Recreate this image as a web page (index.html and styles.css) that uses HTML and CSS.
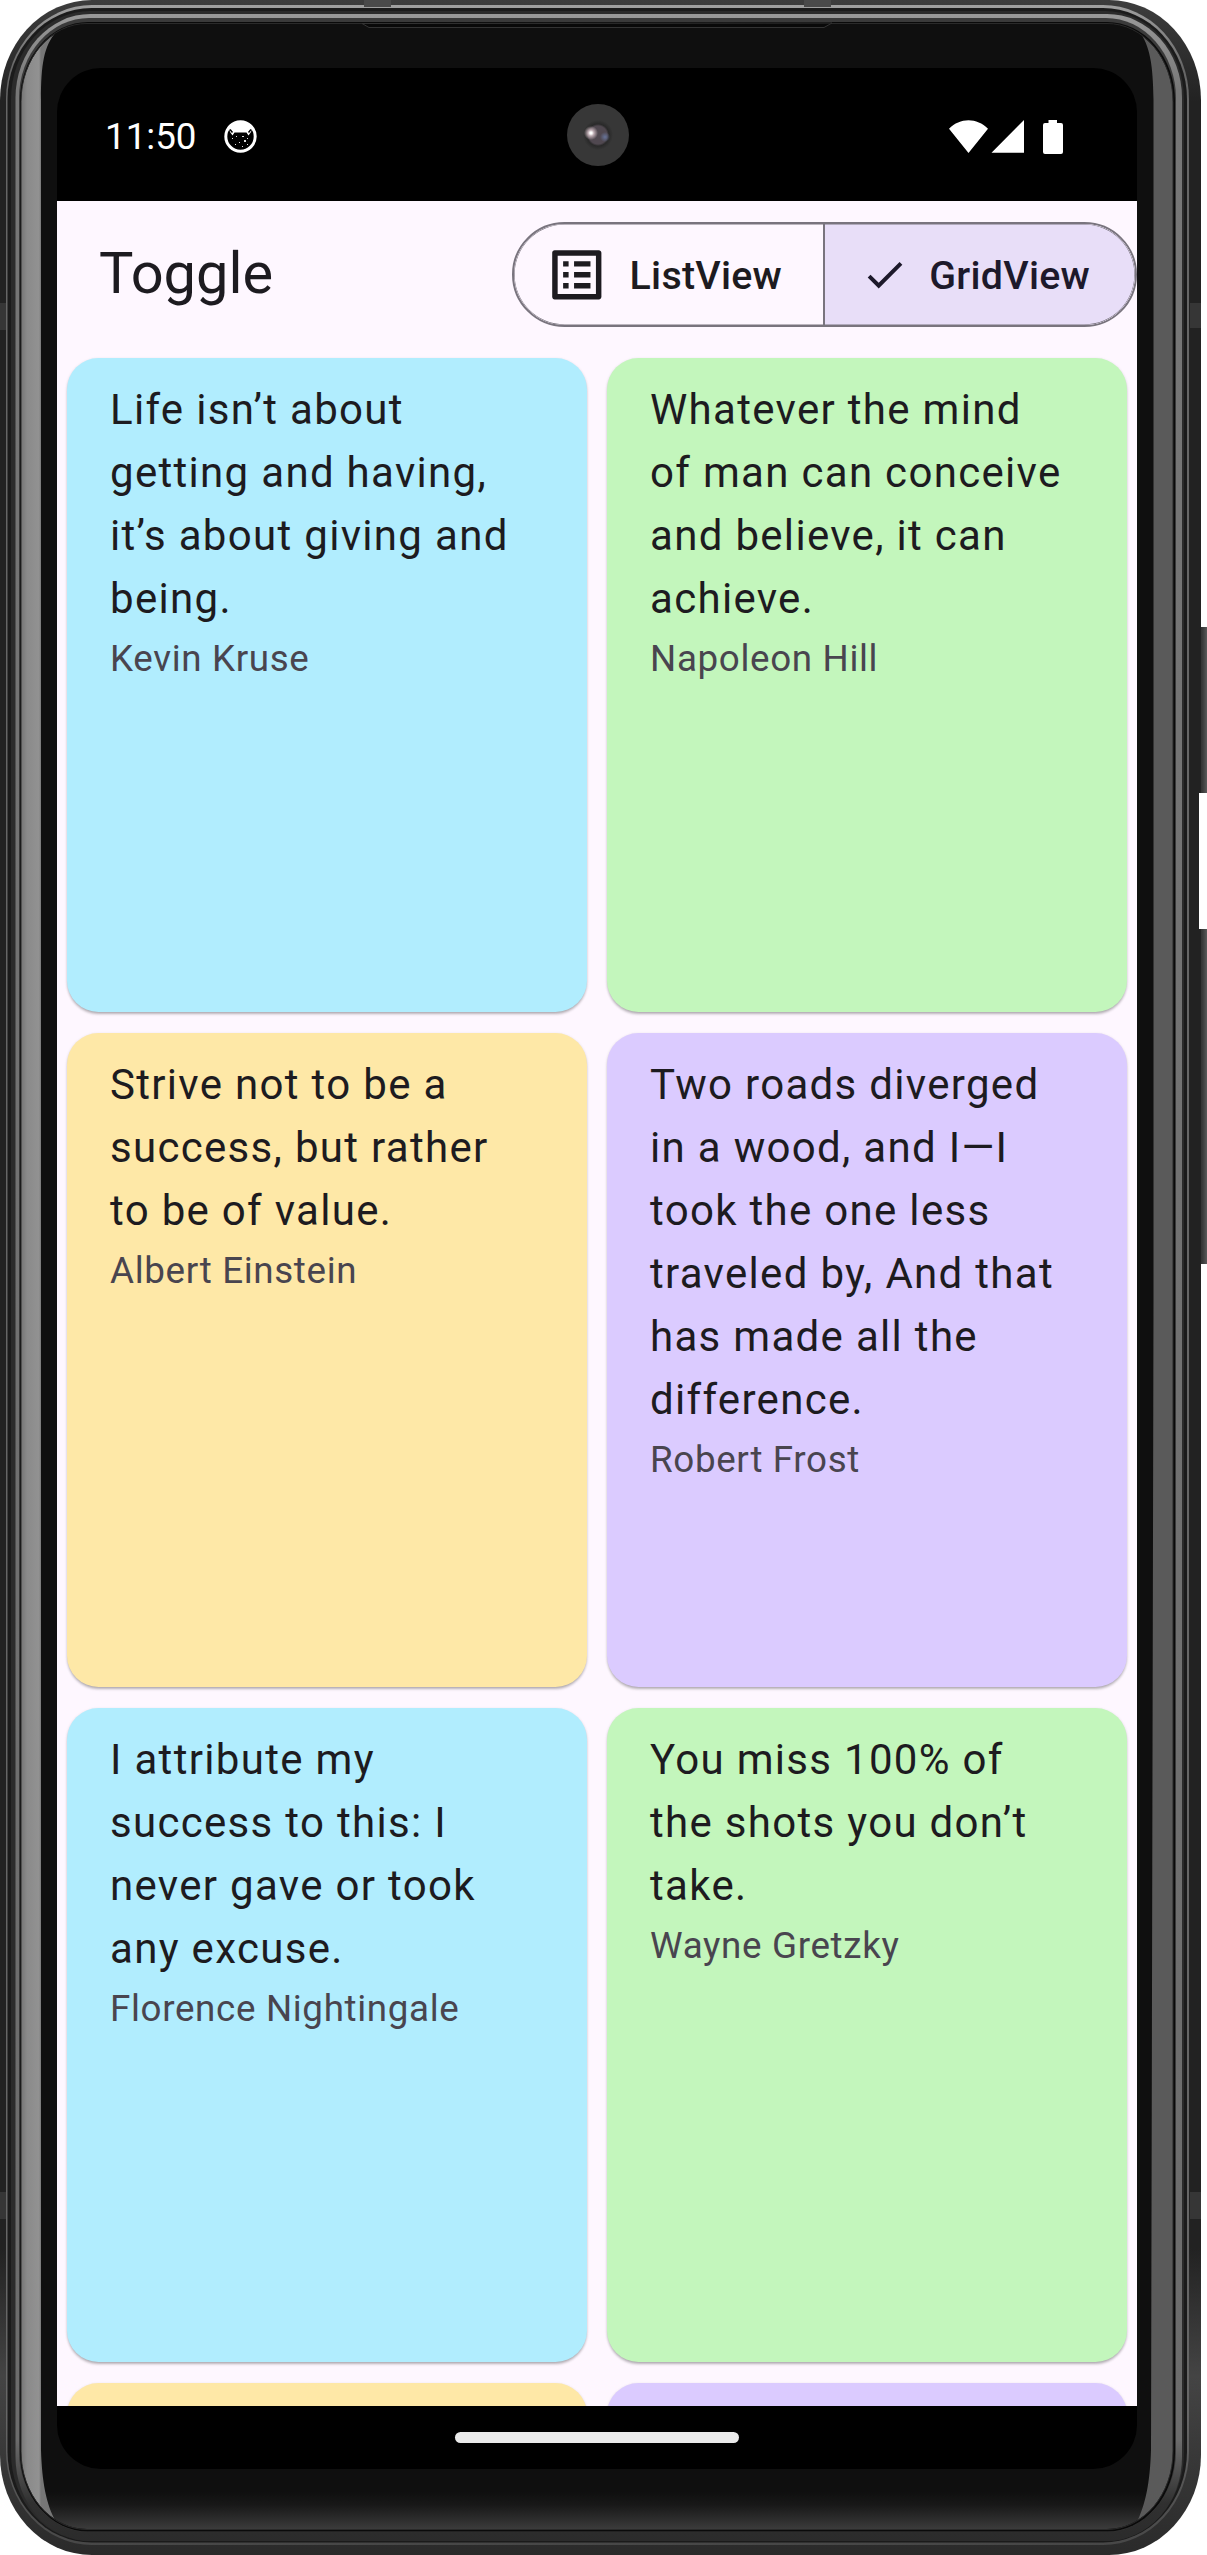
FILE: index.html
```html
<!DOCTYPE html>
<html lang="en">
<head>
<meta charset="utf-8">
<title>Toggle</title>
<link rel="stylesheet" href="styles.css">
</head>
<body>
<div class="device">
  <svg class="frame" viewBox="0 0 1207 2555" aria-hidden="true">
    <defs>
      <linearGradient id="edge" x1="0" y1="0" x2="0" y2="1">
        <stop offset="0" stop-color="#3d3d3d"/><stop offset=".04" stop-color="#222"/><stop offset=".88" stop-color="#222"/><stop offset=".93" stop-color="#444"/><stop offset="1" stop-color="#2a2a2a"/>
      </linearGradient>
      <linearGradient id="rim" x1="0" y1="0" x2="0" y2="1">
        <stop offset="0" stop-color="#a0a0a0"/><stop offset=".025" stop-color="#666"/><stop offset=".95" stop-color="#666"/><stop offset="1" stop-color="#474747"/>
      </linearGradient>
      <linearGradient id="band" x1="0" y1="0" x2="0" y2="1">
        <stop offset="0" stop-color="#999"/><stop offset=".03" stop-color="#777"/><stop offset=".96" stop-color="#6c6c6c"/><stop offset=".985" stop-color="#303030"/><stop offset="1" stop-color="#2b2b2b"/>
      </linearGradient>
      <linearGradient id="left" gradientUnits="userSpaceOnUse" x1="21" y1="0" x2="41" y2="0">
        <stop offset="0" stop-color="#757575"/><stop offset=".3" stop-color="#8a8a8a"/><stop offset=".9" stop-color="#929292"/><stop offset="1" stop-color="#777"/>
      </linearGradient>
      <linearGradient id="glow" x1="0" y1="0" x2="0" y2="1">
        <stop offset="0" stop-color="#0f0f0f"/><stop offset=".35" stop-color="#181818"/><stop offset="1" stop-color="#3b3b3b"/>
      </linearGradient>
      <linearGradient id="key" x1="0" y1="0" x2="1" y2="0">
        <stop offset="0" stop-color="#202020"/><stop offset=".6" stop-color="#3c3c3c"/><stop offset="1" stop-color="#5a5a5a"/>
      </linearGradient>
      <clipPath id="glass"><rect x="21" y="24" width="1152" height="2505" rx="66" ry="78"/></clipPath>
    </defs>
    <rect x="1197" y="627" width="10" height="166" fill="url(#key)"/>
    <rect x="1197" y="929" width="10" height="335" fill="url(#key)"/>
    <rect width="1201" height="2555" rx="92" ry="100" fill="url(#edge)"/>
    <rect x="1199" y="793" width="3" height="136" fill="#fff"/>
    <rect x="6" y="5" width="1183" height="2540" rx="86" ry="94" fill="url(#rim)"/>
    <rect x="7.5" y="8" width="1179.5" height="2534.5" rx="84" ry="91" fill="#1b1b1b"/>
    <rect x="11" y="11" width="1173" height="2530" rx="79" ry="88" fill="#2b2b2b"/>
    <rect x="15.5" y="14" width="1166.5" height="2527" rx="75" ry="84" fill="url(#band)"/>
    <rect x="19" y="18" width="1157" height="2514" rx="70" ry="80" fill="#3a3a3a"/>
    <rect x="20" y="22" width="1155" height="2509.500" rx="68" ry="79" fill="#0a0a0a"/>
    <g clip-path="url(#glass)">
      <rect x="21" y="24" width="1152" height="2505" fill="#0f0f0f"/>
      <rect x="21" y="2492" width="1152" height="37" fill="url(#glow)"/>
      <path d="M0 0 56 32C44 46 41 64 41 100V2450C42 2482 46 2504 56 2522L0 2555Z" fill="url(#left)"/>
      <path d="M1207 0 1139 31C1150 46 1153 64 1153.500 100V1300L1151 2450C1150 2482 1146 2504 1136 2524L1207 2555Z" fill="#5a5a5a"/>
    </g>
    <rect x="21" y="23.500" width="1152" height="2506" rx="66" ry="78" fill="none" stroke="#2a2a2a"/>
    <path d="M362 23.500 369 27.500H824L832 23Z" fill="#090909" stroke="#333"/>
    <path d="M364 0h27v7h-27zM804 0h27v7h-27z" fill="#4a4a4a"/>
    <path d="M0 303h6v27H0zM1190 303h11v25h-11zM0 2192h6v27H0zM1190 2192h11v27h-11z" fill="#363636"/>
  </svg>
  <div class="screen">
    <header class="status">
      <span class="time">11:50</span>
      <svg class="notice" viewBox="0 0 33 33"><circle cx="16.500" cy="16.500" r="14.700" fill="#000" stroke="#fff" stroke-width="3"/><path d="M5 8A14.500 14.500 0 0 1 28 8L27 12 24.500 15.500 22.500 12.500H10.500L8.500 15.500 6 12Z" fill="#fff"/><path d="M6 9.500 8.500 12.500M27 9.500 24.500 12.500" stroke="#000" stroke-width="1.500"/><path d="M8 18h1v1H8zm4-2h1v1h-1zm6 0h2v1h-2zm5 2h1v1h-1zm-8 4h1v1h-1zm5-2h2v2h-2zm-9 4h1v1h-1zm7 2h1v1h-1zm5-2h1v1h-1z" fill="#ddd"/></svg>
      <span class="spacer"></span>
      <svg class="signals" viewBox="0 0 114 34" fill="#fff"><path d="M0 8.700C11-2.700 28-2.700 39 8.700L19.500 33ZM42.500 32.700 75 0V32.700ZM99.500 0h8.500v3h4a2 2 0 0 1 2 2v27a2 2 0 0 1-2 2H96a2 2 0 0 1-2-2V5a2 2 0 0 1 2-2h3.500Z"/></svg>
      <span class="camera"></span>
    </header>
    <main class="app">
      <div class="appbar">
        <h1>Toggle</h1>
        <div class="segmented">
          <button class="segment">
            <svg class="list-icon" viewBox="0 0 24 24"><path d="M19 5v14H5V5h14m1.100-2H3.900c-.5 0-.9.4-.9.9v16.200c0 .4.4.9.9.9h16.200c.4 0 .9-.5.9-.9V3.900c0-.5-.5-.9-.9-.9zM11 7h6v2h-6zm0 4h6v2h-6zm0 4h6v2h-6zM7 7h2v2H7zm0 4h2v2H7zm0 4h2v2H7z"/></svg>
            <span>ListView</span>
          </button>
          <button class="segment selected">
            <svg class="check-icon" viewBox="0 0 24 24"><path d="M9 16.170 4.830 12l-1.420 1.410L9 19 21 7l-1.410-1.410z"/></svg>
            <span>GridView</span>
          </button>
        </div>
      </div>
      <section class="grid">
        <article class="card blue"><p>Life isn’t about getting and having, it’s about giving and being.</p><small>Kevin Kruse</small></article>
        <article class="card green"><p>Whatever the mind of man can conceive and believe, it can achieve.</p><small>Napoleon Hill</small></article>
        <article class="card yellow"><p>Strive not to be a success, but rather to be of value.</p><small>Albert Einstein</small></article>
        <article class="card purple"><p>Two roads diverged in a wood, and I—I took the one less traveled by, And that has made all the difference.</p><small>Robert Frost</small></article>
        <article class="card blue"><p>I attribute my success to this: I never gave or took any excuse.</p><small>Florence Nightingale</small></article>
        <article class="card green"><p>You miss 100% of the shots you don’t take.</p><small>Wayne Gretzky</small></article>
        <article class="card yellow"></article>
        <article class="card purple"></article>
      </section>
    </main>
    <footer class="navbar"><span class="handle"></span></footer>
  </div>
</div>
</body>
</html>
```
FILE: styles.css
```css
* { box-sizing: border-box; }
body { margin: 0; background: #fff; font-family: Roboto, sans-serif; color: #1d1b20; }
.device { position: relative; width: 1207px; height: 2555px; padding: 68px 70px 86px 57px; overflow: hidden; }
.frame { position: absolute; inset: 0; width: 1207px; height: 2555px; }
.screen { position: relative; display: flex; flex-direction: column; width: 1080px; height: 2401px; border-radius: 44px; overflow: hidden; background: #000; }
.status { position: relative; display: flex; align-items: center; height: 133px; padding: 4px 74px 0 48px; color: #fff; }
.time { font-size: 36.75px; line-height: 42px; }
.notice { width: 33px; height: 33px; margin-left: 27px; }
.spacer { flex: 1; }
.signals { width: 114px; height: 34px; }
.camera { position: absolute; left: 510px; top: 36px; width: 62px; height: 62px; border-radius: 50%; background: radial-gradient(circle at 24px 29px, #fff 0 1px, #bba9b0 3px, transparent 7px), radial-gradient(circle at 38px 33px, #667398 0, transparent 5px), radial-gradient(circle at 31px 31px, #504850 0 9px, #292929 11px, #373737 15px); }
.app { height: 2205px; overflow: hidden; background: #fef7ff; }
.appbar { display: flex; align-items: center; justify-content: space-between; height: 147px; padding-left: 42px; }
h1 { margin: 0; padding-bottom: 2px; font-size: 57.75px; line-height: 73px; font-weight: 400; }
.segmented { position: relative; display: grid; grid-template-columns: 309px 1fr; width: 625px; height: 105px; border: 2px solid #79747e; border-radius: 53px; overflow: hidden; }
.segmented::after { content: ""; position: absolute; inset: 0; border-radius: 51px; box-shadow: inset 0 0 0 .6px #79747e; }
.segment { display: flex; align-items: center; padding: 0 0 0 29.5px; border: 0; background: none; color: #1d1b20; font: 500 39.375px/52px Roboto, sans-serif; letter-spacing: .26px; gap: 20.5px; }
.segment span { padding-top: 2px; }
.selected { padding-left: 36px; border-left: 2px solid #79747e; background: #e8def8; color: #1d192b; gap: 21px; }
.segment svg { flex: none; fill: currentColor; }
.list-icon { width: 65.6px; height: 65.6px; }
.check-icon { width: 47.25px; height: 47.25px; }
.grid { display: grid; grid-template-columns: 520px 520px; grid-auto-rows: 654px; gap: 21px 20px; padding: 10px; }
.card { padding: 20px 62px 0 43px; border-radius: 31.5px; box-shadow: 0 3px 3px -1px rgba(0,0,0,.22), 0 1px 3px rgba(0,0,0,.16); }
.card p { margin: 0 0 3px; font-size: 42px; line-height: 63px; letter-spacing: 1.31px; }
.card small { display: block; color: #49454f; font-size: 36.75px; line-height: 52px; letter-spacing: .66px; }
.blue { background: #b1edfe; }
.green { background: #c3f6bc; }
.yellow { background: #fee8a7; }
.purple { background: #dbcbff; }
.navbar { display: flex; justify-content: center; height: 63px; padding-top: 26px; }
.handle { width: 284px; height: 11px; border-radius: 6px; background: #ebebeb; }
```
